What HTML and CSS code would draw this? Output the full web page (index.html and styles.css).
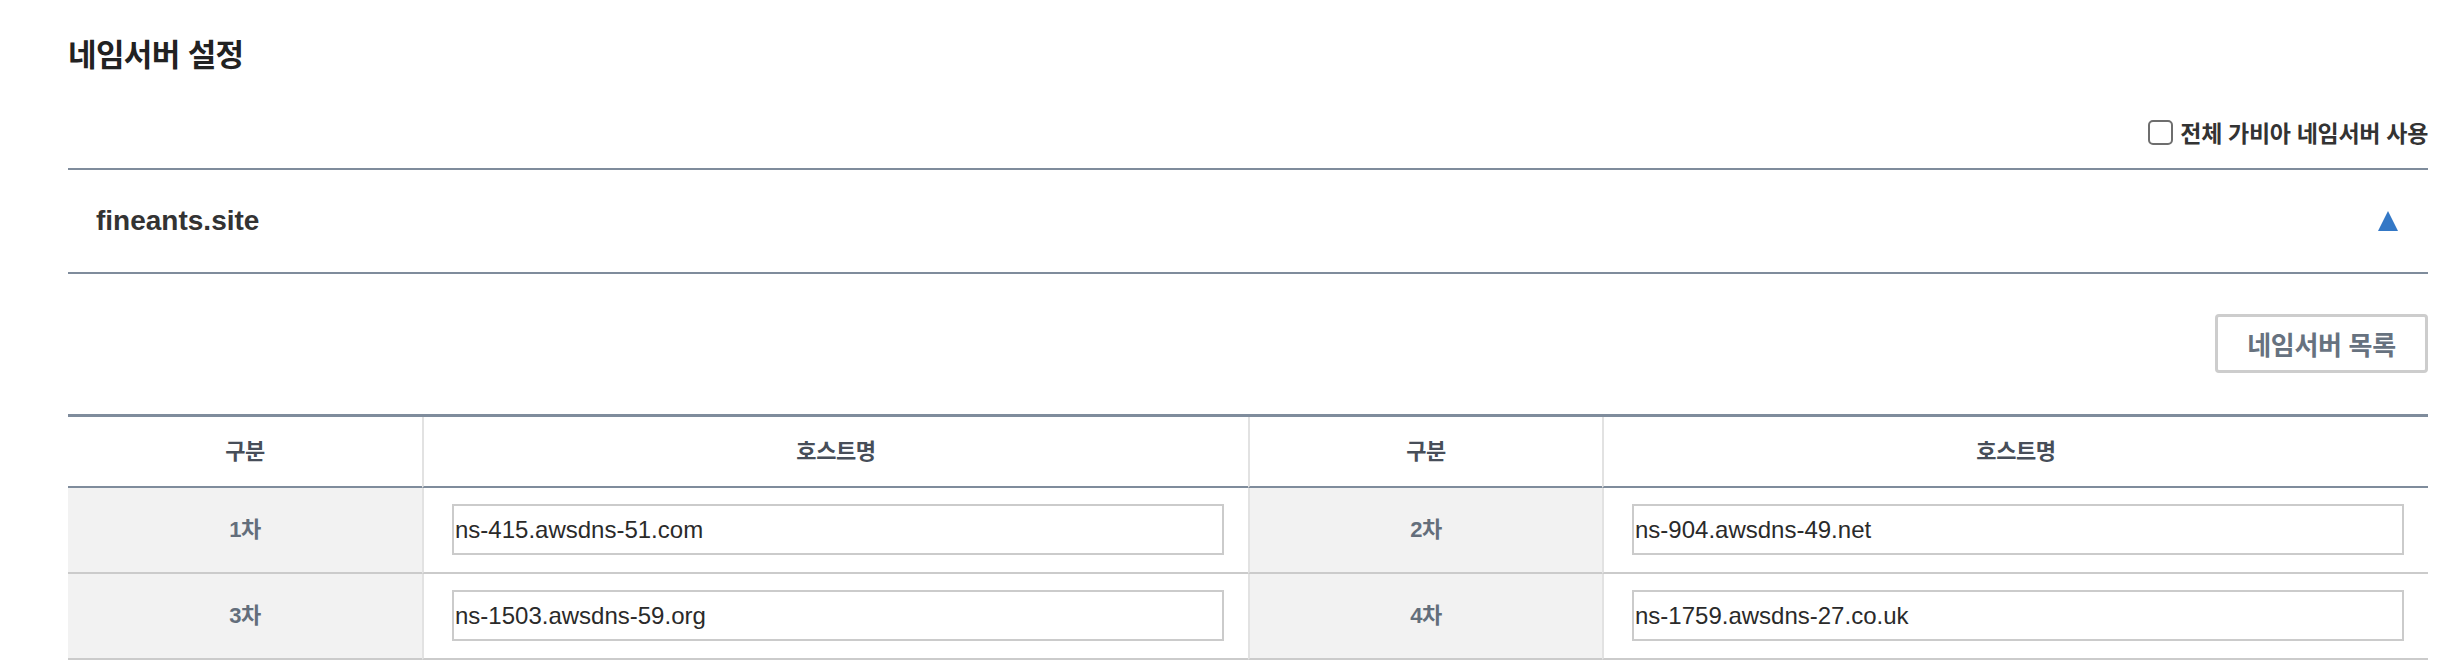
FILE: index.html
```html
<!DOCTYPE html>
<html lang="ko">
<head>
<meta charset="utf-8">
<title>네임서버 설정</title>
<link rel="stylesheet" href="styles.css">
</head>
<body>
<div class="page">
  <h2 class="title">네임서버 설정</h2>
  <div class="options">
    <label class="all-ns"><input type="checkbox" class="chk"><span>전체 가비아 네임서버 사용</span></label>
  </div>
  <section class="domain">
    <div class="domain-head">
      <span class="domain-name">fineants.site</span>
      <svg class="toggle" width="20" height="20" viewBox="0 0 20 20"><polygon points="10,0 20,20 0,20" fill="#3478c6"/></svg>
    </div>
    <div class="toolbar">
      <button class="btn-list" type="button">네임서버 목록</button>
    </div>
    <table class="ns-table">
      <colgroup>
        <col class="c-label"><col class="c-host"><col class="c-label"><col class="c-host">
      </colgroup>
      <thead>
        <tr><th>구분</th><th>호스트명</th><th>구분</th><th>호스트명</th></tr>
      </thead>
      <tbody>
        <tr>
          <td class="lbl">1차</td>
          <td class="host"><input class="ns-input" type="text" value="ns-415.awsdns-51.com"></td>
          <td class="lbl">2차</td>
          <td class="host"><input class="ns-input" type="text" value="ns-904.awsdns-49.net"></td>
        </tr>
        <tr>
          <td class="lbl">3차</td>
          <td class="host"><input class="ns-input" type="text" value="ns-1503.awsdns-59.org"></td>
          <td class="lbl">4차</td>
          <td class="host"><input class="ns-input" type="text" value="ns-1759.awsdns-27.co.uk"></td>
        </tr>
      </tbody>
    </table>
  </section>
</div>
</body>
</html>
```

FILE: styles.css
```css
html, body {
  margin: 0;
  background: #fff;
}
body {
  font-family: "Liberation Sans", "Noto Sans CJK KR", sans-serif;
  color: #333;
}
.page {
  padding: 36px 34px 0 68px;
}
.title {
  margin: 0;
  font-size: 31px;
  line-height: 40px;
  font-weight: 700;
  color: #222;
  letter-spacing: -0.6px;
}
.options {
  display: flex;
  justify-content: flex-end;
  align-items: center;
  height: 40px;
  margin: 36px 0 16px;
}
.all-ns {
  display: flex;
  align-items: center;
  gap: 7px;
  font-size: 23px;
  font-weight: 700;
  color: #333;
  letter-spacing: -0.3px;
}
.chk {
  appearance: none;
  -webkit-appearance: none;
  width: 25px;
  height: 25px;
  margin: 0;
  box-sizing: border-box;
  border: 2px solid #6e6e6e;
  border-radius: 5px;
  background: #fff;
}
.domain-head {
  display: flex;
  align-items: center;
  justify-content: space-between;
  height: 102px;
  padding: 0 30px 0 28px;
  border-top: 2px solid #7f8c9c;
  border-bottom: 2px solid #7f8c9c;
}
.domain-name {
  font-size: 28px;
  font-weight: 700;
  color: #333;
}
.toggle {
  display: block;
}
.toolbar {
  display: flex;
  justify-content: flex-end;
  margin: 40px 0 41px;
}
.btn-list {
  width: 213px;
  height: 59px;
  box-sizing: border-box;
  border: 3px solid #cdcdcd;
  border-radius: 4px;
  background: #fff;
  font-family: "Liberation Sans", "Noto Sans CJK KR", sans-serif;
  font-size: 26px;
  font-weight: 700;
  color: #67727f;
  letter-spacing: -0.3px;
  padding: 0;
}
.ns-table {
  width: 100%;
  table-layout: fixed;
  border-collapse: separate;
  border-spacing: 0;
  border-top: 3px solid #7f8c9c;
}
.c-label { width: 15%; }
.c-host { width: 35%; }
.ns-table th {
  padding: 0;
  line-height: 69px;
  font-size: 22px;
  font-weight: 700;
  color: #474e59;
  letter-spacing: -0.4px;
  background: #fff;
  border-bottom: 2px solid #7f8c9c;
}
.ns-table th + th,
.ns-table td + td {
  border-left: 2px solid #e2e2e2;
}
.ns-table td {
  border-bottom: 2px solid #cbcbcb;
}
.lbl {
  padding: 0;
  line-height: 84px;
  text-align: center;
  background: #f2f2f2;
  font-size: 22px;
  font-weight: 700;
  color: #636e7b;
  letter-spacing: -0.4px;
}
.host {
  padding: 16px 24px 17px 28px;
  background: #fff;
}
.ns-input {
  display: block;
  width: 100%;
  height: 51px;
  box-sizing: border-box;
  margin: 0;
  padding: 0 1px;
  border: 2px solid #cbcbcb;
  border-radius: 0;
  background: #fff;
  font-family: "Liberation Sans", sans-serif;
  font-size: 24px;
  color: #2a2a2a;
  outline: none;
}
```
